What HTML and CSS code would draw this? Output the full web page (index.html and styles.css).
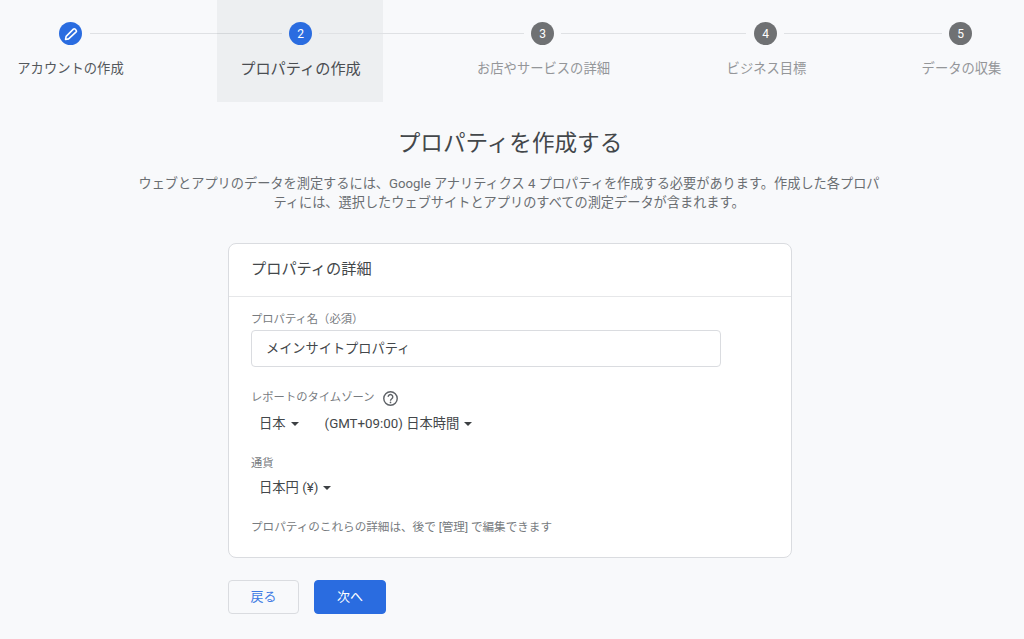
FILE: index.html
```html
<!DOCTYPE html>
<html lang="ja">
<head>
<meta charset="utf-8">
<title>プロパティを作成する</title>
<link rel="stylesheet" href="styles.css">
</head>
<body>
<nav class="stepper">
  <div class="step">
    <span class="dot dot-active"><svg class="pencil" viewBox="0 0 24 24" width="16" height="16"><path fill="none" stroke="#fff" stroke-width="2.400" stroke-linejoin="round" d="M3.800 20.200l.9-4.600L15.600 4.700a1.800 1.800 0 0 1 2.500 0l1.600 1.600a1.800 1.800 0 0 1 0 2.500L8.400 19.300z"/></svg></span>
    <span class="step-label label-done">アカウントの作成</span>
  </div>
  <span class="line line-1"></span>
  <div class="step step-current">
    <span class="dot dot-active">2</span>
    <span class="step-label label-current">プロパティの作成</span>
  </div>
  <span class="line line-2"></span>
  <div class="step">
    <span class="dot">3</span>
    <span class="step-label">お店やサービスの詳細</span>
  </div>
  <span class="line line-3"></span>
  <div class="step">
    <span class="dot">4</span>
    <span class="step-label">ビジネス目標</span>
  </div>
  <span class="line line-4"></span>
  <div class="step">
    <span class="dot">5</span>
    <span class="step-label">データの収集</span>
  </div>
</nav>

<main class="content">
  <h1 class="title">プロパティを作成する</h1>
  <p class="intro">ウェブとアプリのデータを測定するには、Google アナリティクス 4 プロパティを作成する必要があります。作成した各プロパティには、選択したウェブサイトとアプリのすべての測定データが含まれます。</p>

  <section class="card">
    <h2 class="card-title">プロパティの詳細</h2>
    <div class="card-body">
      <label class="field-label">プロパティ名（必須）</label>
      <div class="input">メインサイトプロパティ</div>

      <div class="field-label label-tz">レポートのタイムゾーン
        <svg class="help" viewBox="0 0 24 24" width="17" height="17"><circle cx="12" cy="12" r="9.500" fill="none" stroke="#5f6368" stroke-width="2"/><path fill="none" stroke="#5f6368" stroke-width="2" d="M8.800 9.700a3.200 3.200 0 1 1 5 2.600c-1.200.9-1.800 1.400-1.800 2.900"/><circle cx="12" cy="17.600" r="1.200" fill="#5f6368"/></svg>
      </div>
      <div class="selects">
        <span class="select select-country">日本<i class="caret"></i></span>
        <span class="select">(GMT+09:00) 日本時間<i class="caret"></i></span>
      </div>

      <div class="field-label label-currency">通貨</div>
      <div class="selects selects-currency">
        <span class="select">日本円 (¥)<i class="caret"></i></span>
      </div>

      <p class="note">プロパティのこれらの詳細は、後で [管理] で編集できます</p>
    </div>
  </section>

  <div class="actions">
    <button class="btn btn-back">戻る</button>
    <button class="btn btn-next">次へ</button>
  </div>
</main>
</body>
</html>
```
FILE: styles.css
```css
* { box-sizing: border-box; }
html, body { margin: 0; height: 100%; }
body {
  background: #f8f9fb;
  color: #3c4043;
  font-family: Roboto, "Noto Sans CJK JP", sans-serif;
  text-spacing-trim: space-all;
  overflow: hidden;
}

/* Stepper */
.stepper {
  display: flex;
  align-items: flex-start;
  height: 102px;
  padding: 22px 0 0 59px;
}
.step {
  position: relative;
  width: 23px;
  display: flex;
  flex-direction: column;
  align-items: center;
  flex: none;
}
.step-current::before {
  content: "";
  position: absolute;
  top: -22px;
  left: -72px;
  width: 166px;
  height: 102px;
  background: rgba(60, 64, 67, 0.055);
}
.dot {
  position: relative;
  width: 23px;
  height: 23px;
  border-radius: 50%;
  background: #6f7173;
  color: #fff;
  font-size: 12px;
  display: flex;
  align-items: center;
  justify-content: center;
}
.dot-active { background: #2a6ce0; }
.step-label {
  position: relative;
  margin-top: 15px;
  margin-left: 2px;
  font-size: 13.3px;
  line-height: 18px;
  white-space: nowrap;
  color: #949699;
}
.label-done { color: #54585c; margin-left: 0; }
.label-current { font-size: 15.2px; color: #4a4d51; margin-left: 0; }
.line {
  position: relative;
  flex: none;
  height: 1px;
  margin: 11px 7px 0;
  background: #dfe1e4;
}
.line-1 { width: 192px; margin-left: 8px; }
.line-2 { width: 205px; }
.line-3 { width: 185px; margin-right: 8px; }
.line-4 { width: 158px; }

/* Content */
.content {
  width: 564px;
  margin-left: 228px;
  display: flex;
  flex-direction: column;
}
.title {
  margin: 27px -20px 0;
  text-align: center;
  font-size: 22.6px;
  line-height: 30px;
  font-weight: 400;
  color: #43474a;
}
.intro {
  width: 750px;
  margin: 16px 0 0 -94px;
  font-size: 13.2px;
  line-height: 18.500px;
  text-align: center;
  color: #6a6e72;
}

/* Card */
.card {
  height: 315px;
  margin-top: 31px;
  background: #fff;
  border: 1px solid #dadce0;
  border-radius: 8px;
}
.card-title {
  margin: 0;
  height: 53px;
  padding: 0 22px;
  border-bottom: 1px solid #e6e7e9;
  font-size: 15.2px;
  font-weight: 400;
  line-height: 50px;
  color: #43474a;
}
.card-body { padding: 15px 22px 0; }
.field-label {
  display: flex;
  align-items: center;
  font-size: 11.3px;
  line-height: 16px;
  color: #777b80;
}
.input {
  width: 470px;
  height: 37px;
  margin-top: 2px;
  padding: 0 14px;
  border: 1px solid #dadce0;
  border-radius: 4px;
  font-size: 13.2px;
  line-height: 35px;
  color: #43474a;
}
.label-tz { margin-top: 22px; height: 18px; }
.help { margin-left: 8px; }
.selects {
  display: flex;
  margin-top: 7px;
  height: 20px;
  padding-left: 8px;
}
.selects-currency { margin-top: 6px; }
.select {
  display: inline-flex;
  align-items: center;
  font-size: 13.3px;
  line-height: 20px;
  color: #43474a;
}
.select-country { margin-right: 26px; }
.caret {
  width: 0;
  height: 0;
  margin-left: 5px;
  border-left: 4px solid transparent;
  border-right: 4px solid transparent;
  border-top: 4px solid #3c4043;
}
.label-currency { margin-top: 22px; }
.note {
  margin: 21px 0 0;
  font-size: 11.6px;
  line-height: 16px;
  color: #777b80;
}

/* Buttons */
.actions {
  display: flex;
  gap: 15px;
  margin-top: 22px;
}
.btn {
  height: 34px;
  border-radius: 4px;
  font-family: inherit;
  font-size: 13px;
  padding: 0 0 3px;
}
.btn-back {
  width: 71px;
  background: #f8f9fb;
  border: 1px solid #dadce0;
  color: #3f7be3;
}
.btn-next {
  width: 72px;
  background: #2a6ce0;
  border: 1px solid #2a6ce0;
  color: #fff;
}
```
